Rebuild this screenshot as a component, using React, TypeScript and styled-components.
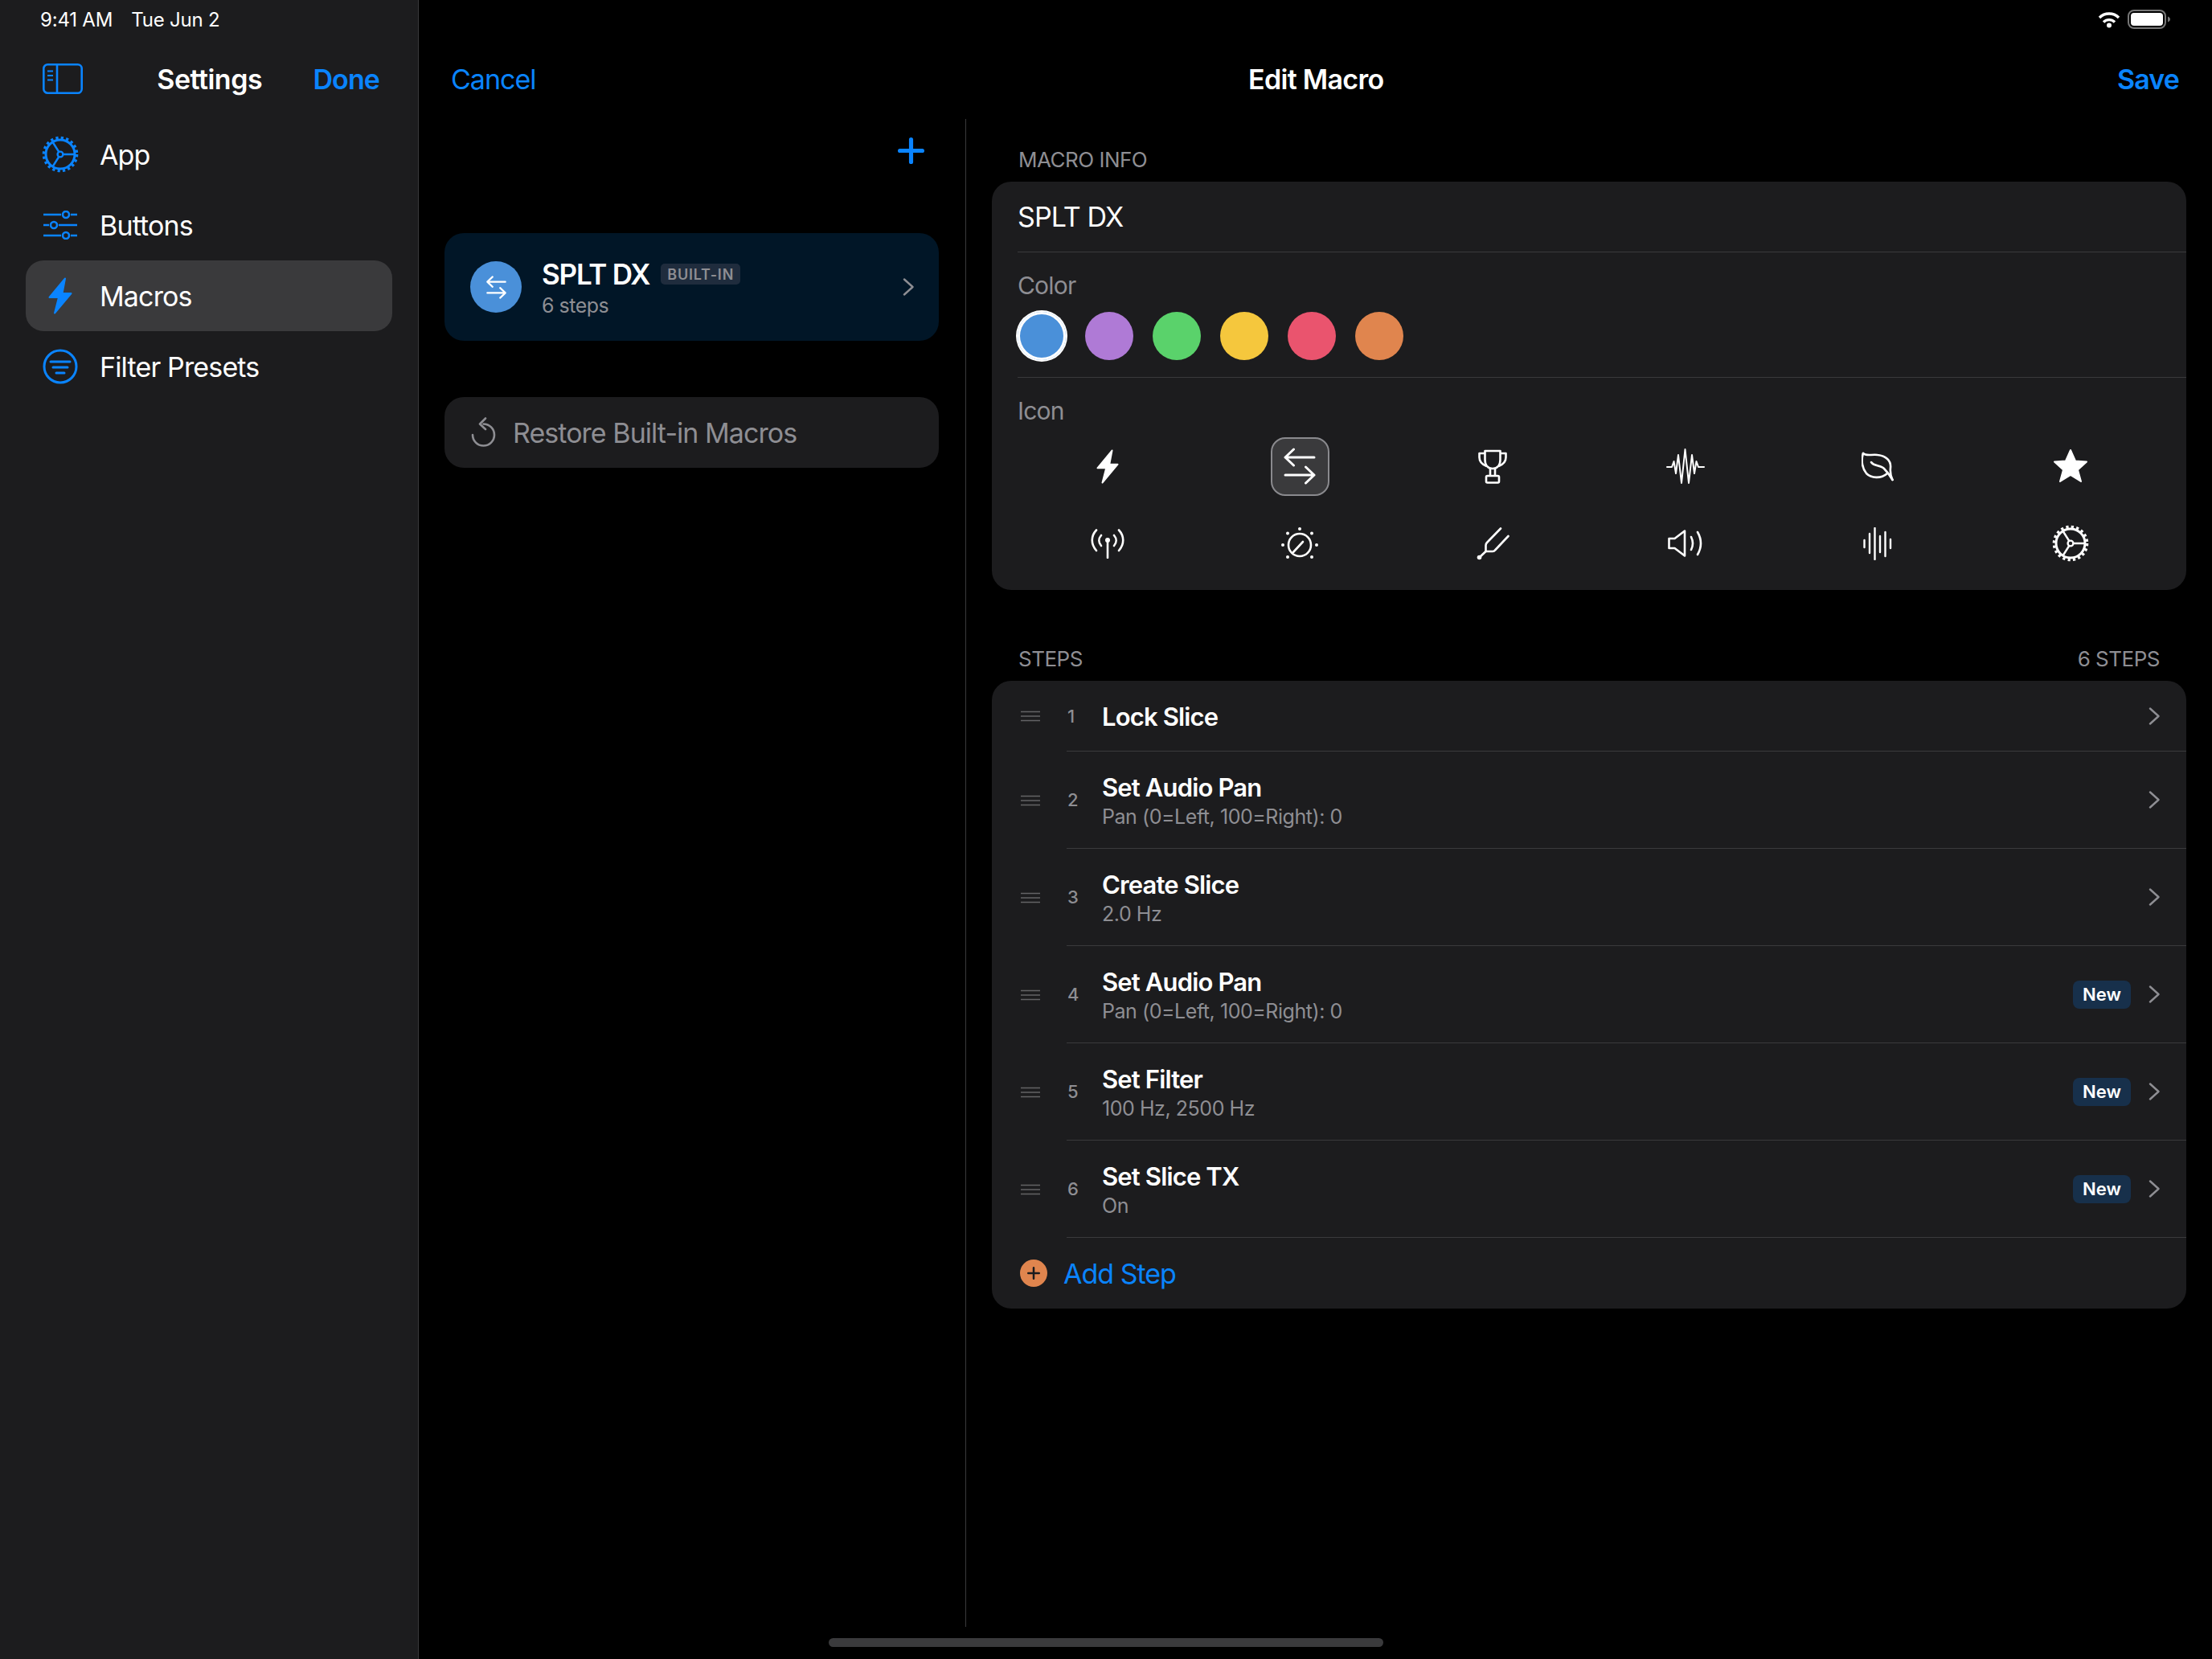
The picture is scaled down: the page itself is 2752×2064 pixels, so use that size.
import React from 'react'
import styled, { createGlobalStyle } from 'styled-components'

const BLUE = '#0a84ff'
const GREY = '#8e8e93'
const PANEL = '#1c1c1e'
const LINE = '#3a3a3c'

const GlobalStyle = createGlobalStyle`
  html, body {
    margin: 0;
    padding: 0;
    background: #000;
  }
  body {
    font-family: Inter, "Noto Sans", "Liberation Sans", sans-serif;
    color: #fff;
  }
`

const Screen = styled.div`
  position: relative;
  display: flex;
  width: 2752px;
  height: 2064px;
  overflow: hidden;
  background: #000;
`

const Sidebar = styled.aside`
  flex: 0 0 521px;
  box-sizing: border-box;
  background: ${PANEL};
  border-right: 1px solid ${LINE};
`

const StatusRow = styled.div`
  display: flex;
  align-items: center;
  height: 48px;
  box-sizing: border-box;
`

const SidebarStatus = styled(StatusRow)`
  padding-left: 50px;
  gap: 23px;
  font-size: 24px;
  font-weight: 400;
  letter-spacing: -0.2px;
`

const MainStatus = styled(StatusRow)`
  justify-content: flex-end;
  gap: 9px;
  padding-right: 52px;
`

const SidebarNav = styled.div`
  display: flex;
  align-items: center;
  height: 100px;
  padding: 0 48px 0 53px;
`

const SidebarTitle = styled.div`
  flex: 1;
  text-align: center;
  font-size: 34px;
  font-weight: 600;
  letter-spacing: -0.5px;
  padding-left: 29px;
`

const LinkText = styled.span<{ $bold?: boolean }>`
  color: ${BLUE};
  font-size: 34px;
  font-weight: ${({ $bold }) => ($bold ? 600 : 400)};
  letter-spacing: ${({ $bold }) => ($bold ? '-0.9px' : '-1px')};
`

const MenuList = styled.nav`
  padding: 0 32px;
`

const MenuRow = styled.div<{ $active?: boolean }>`
  display: flex;
  align-items: center;
  height: 88px;
  border-radius: 22px;
  background: ${({ $active }) => ($active ? '#3a3a3c' : 'transparent')};
  font-size: 34px;
  letter-spacing: -0.85px;
`

const MenuIcon = styled.span`
  display: flex;
  align-items: center;
  justify-content: center;
  flex: 0 0 48px;
  margin: 0 25px 0 19px;
`

const Main = styled.main`
  flex: 1;
  display: flex;
  flex-direction: column;
  min-width: 0;
`

const MainNav = styled.div`
  display: flex;
  align-items: center;
  justify-content: space-between;
  height: 100px;
  padding: 0 41px 0 40px;
`

const MainTitle = styled.div`
  font-size: 34px;
  font-weight: 600;
  letter-spacing: -0.7px;
  padding-right: 26px;
`

const Columns = styled.div`
  flex: 1;
  display: flex;
  min-height: 0;
  margin-bottom: 40px;
`

const ListColumn = styled.section`
  flex: 0 0 681px;
  box-sizing: border-box;
  padding: 0 33px 0 32px;
  border-right: 1px solid ${LINE};
`

const ListTools = styled.div`
  display: flex;
  justify-content: flex-end;
  height: 142px;
  box-sizing: border-box;
  padding: 23px 18px 0 0;
`

const MacroCard = styled.div`
  display: flex;
  align-items: center;
  height: 134px;
  padding: 0 31px 0 32px;
  border-radius: 24px;
  background: #011627;
`

const MacroBadgeIcon = styled.span`
  display: flex;
  align-items: center;
  justify-content: center;
  flex: 0 0 64px;
  height: 64px;
  border-radius: 50%;
  background: #4a90d9;
  margin-right: 25px;
`

const MacroText = styled.div`
  flex: 1;
  padding-top: 2px;
`

const MacroTitleRow = styled.div`
  display: flex;
  align-items: center;
  gap: 14px;
  height: 44px;
`

const MacroTitle = styled.span`
  font-size: 35px;
  font-weight: 600;
  letter-spacing: -1.2px;
`

const BuiltInTag = styled.span`
  display: flex;
  align-items: center;
  height: 26px;
  padding: 0 8px;
  border-radius: 5px;
  background: #1f2c3d;
  color: ${GREY};
  font-size: 18px;
  font-weight: 600;
  letter-spacing: 0.8px;
`

const MacroSub = styled.div`
  color: ${GREY};
  font-size: 25px;
  line-height: 34px;
  letter-spacing: -0.5px;
`

const RestoreButton = styled.div`
  display: flex;
  align-items: center;
  gap: 21px;
  height: 88px;
  margin-top: 70px;
  padding-left: 33px;
  border-radius: 24px;
  background: ${PANEL};
  color: ${GREY};
  font-size: 34px;
  letter-spacing: -0.95px;
`

const DetailColumn = styled.section`
  flex: 1;
  box-sizing: border-box;
  padding: 0 32px;
`

const SectionHeader = styled.div`
  display: flex;
  align-items: center;
  justify-content: space-between;
  height: 78px;
  box-sizing: border-box;
  padding: 22px 33px 0 33px;
  color: ${GREY};
  font-size: 26px;
  letter-spacing: -0.5px;
`

const Card = styled.div`
  margin-bottom: 35px;
  border-radius: 24px;
  background: ${PANEL};
  overflow: hidden;
`

const NameRow = styled.div`
  display: flex;
  align-items: center;
  height: 87px;
  margin-left: 32px;
  border-bottom: 1px solid ${LINE};
  font-size: 34px;
  letter-spacing: -0.9px;
`

const FieldSection = styled.div<{ $divided?: boolean }>`
  margin-left: 32px;
  padding: 23px 0 ${({ $divided }) => ($divided ? '21px' : '22px')};
  border-bottom: ${({ $divided }) => ($divided ? `1px solid ${LINE}` : 'none')};
`

const FieldLabel = styled.div`
  height: 36px;
  line-height: 36px;
  margin-bottom: 15px;
  color: ${GREY};
  font-size: 30px;
  letter-spacing: -0.8px;
`

const SwatchRow = styled.div`
  display: flex;
  gap: 24px;
`

const Swatch = styled.span<{ $color: string; $selected?: boolean }>`
  width: 60px;
  height: 60px;
  border-radius: 50%;
  background: ${({ $color }) => $color};
  box-shadow: ${({ $selected }) => ($selected ? '0 0 0 2px #fff, inset 0 0 0 3px #fff' : 'none')};
`

const IconGrid = styled.div`
  display: grid;
  grid-template-columns: repeat(6, 1fr);
  row-gap: 24px;
  margin: 0 -8px 0 -8px;
  padding-right: 32px;
`

const IconCell = styled.div`
  display: flex;
  align-items: center;
  justify-content: center;
  height: 72px;
`

const SelectedTile = styled.div`
  display: flex;
  align-items: center;
  justify-content: center;
  box-sizing: border-box;
  width: 73px;
  height: 73px;
  border: 2px solid #8a8a8e;
  border-radius: 18px;
  background: #3a3a3c;
`

const StepRow = styled.div<{ $height: number }>`
  display: flex;
  height: ${({ $height }) => $height}px;
`

const Handle = styled.div`
  flex: 0 0 93px;
  display: flex;
  align-items: center;
  padding-left: 36px;
  box-sizing: border-box;
`

const StepBody = styled.div`
  flex: 1;
  display: flex;
  align-items: center;
  padding-right: 33px;
  border-bottom: 1px solid ${LINE};
`

const StepNumber = styled.span`
  flex: 0 0 43px;
  padding-left: 1px;
  color: ${GREY};
  font-size: 22px;
  font-weight: 500;
`

const StepText = styled.div`
  flex: 1;
  padding-top: 2px;
`

const StepTitle = styled.div`
  font-size: 31px;
  line-height: 40px;
  font-weight: 600;
  letter-spacing: -0.85px;
`

const StepSub = styled.div`
  color: ${GREY};
  font-size: 25px;
  line-height: 32px;
  letter-spacing: -0.45px;
`

const NewTag = styled.span`
  display: flex;
  align-items: center;
  justify-content: center;
  width: 72px;
  height: 35px;
  margin-right: 22px;
  border-radius: 8px;
  background: #17304b;
  font-size: 22px;
  font-weight: 600;
`

const AddRow = styled.div`
  display: flex;
  align-items: center;
  gap: 20px;
  height: 88px;
  padding-left: 35px;
`

const AddIcon = styled.span`
  display: flex;
  align-items: center;
  justify-content: center;
  width: 34px;
  height: 34px;
  border-radius: 50%;
  background: #e0854e;
`

const HomeIndicator = styled.div`
  position: absolute;
  left: 1031px;
  bottom: 15px;
  width: 690px;
  height: 11px;
  border-radius: 6px;
  background: #3a3a3c;
`

type IconProps = { color?: string }

const Gear = ({ color = '#fff', size = 46 }: IconProps & { size?: number }) => (
  <svg width={size} height={size} viewBox="0 0 46 46" fill="none" stroke={color}>
    <circle cx="23" cy="23" r="18" strokeWidth="3" />
    <circle cx="23" cy="23" r="20.6" strokeWidth="3.4" strokeDasharray="3.24 3.24" />
    <circle cx="23" cy="23" r="3.4" strokeWidth="2.4" />
    <path d="M26.4 23H41M21.3 20 14 8.5M21.3 26 14 37.5" strokeWidth="2.4" />
  </svg>
)

const Sliders = ({ color = BLUE }: IconProps) => (
  <svg width="44" height="36" viewBox="0 0 44 36" fill="none" stroke={color} strokeWidth="2.6">
    <path d="M1 5H23M35 5H43M1 18H8M20 18H43M1 31H23M35 31H43" />
    <circle cx="29" cy="5" r="4" />
    <circle cx="14" cy="18" r="4" />
    <circle cx="29" cy="31" r="4" />
  </svg>
)

const Bolt = ({ color = '#fff', w = 30, h = 46 }: IconProps & { w?: number; h?: number }) => (
  <svg width={w} height={h} viewBox="0 0 30 46" fill={color} stroke={color} strokeWidth="2" strokeLinejoin="round">
    <path d="M21 1.5 1.5 25H13L8 44.5 28.5 20H17.5Z" />
  </svg>
)

const FilterCircle = () => (
  <svg width="44" height="44" viewBox="0 0 44 44" fill="none" stroke={BLUE} strokeWidth="3" strokeLinecap="round">
    <circle cx="22" cy="22" r="20" />
    <path d="M10 16H34M13 23H31M17 30H27" />
  </svg>
)

const SidebarToggle = () => (
  <svg width="50" height="38" viewBox="0 0 50 38" fill="none" stroke={BLUE} strokeWidth="2.6">
    <rect x="1.3" y="1.3" width="47.4" height="35.4" rx="5" />
    <path d="M18 1V37" />
    <path d="M6 9.5H13M6 15H13M6 20.5H13" strokeWidth="2" />
  </svg>
)

const Swap = ({ w, h, stroke }: { w: number; h: number; stroke: number }) => (
  <svg width={w} height={h} viewBox="0 0 40 46" fill="none" stroke="#fff" strokeWidth={stroke} strokeLinecap="round" strokeLinejoin="round">
    <path d="M38 12H2M12.5 2 2 12 12.5 22" />
    <path d="M2 34H38M27.5 24 38 34 27.5 44" />
  </svg>
)

const Trophy = () => (
  <svg width="38" height="43" viewBox="0 0 38 43" fill="none" stroke="#fff" strokeWidth="2.6" strokeLinejoin="round">
    <path d="M9.5 2h19v11c0 7-4 11-9.5 11S9.5 20 9.5 13z" />
    <path d="M9.5 5H2.5v5c0 6 4 9 9 11M28.5 5h7v5c0 6-4 9-9 11" />
    <path d="M16 24v9M22 24v9" />
    <rect x="11" y="33" width="16" height="8.5" rx="1.5" />
  </svg>
)

const Waveform = () => (
  <svg width="48" height="45" viewBox="0 0 48 45" fill="none" stroke="#fff" strokeWidth="2" strokeLinecap="round" strokeLinejoin="round">
    <polyline points="1,23 7,23 9.5,16 12,31 15,8 19,43 23.5,1 28,43 32,8 35,31 37.5,16 40,23 47,23" />
  </svg>
)

const Leaf = () => (
  <svg width="40" height="37" viewBox="0 0 40 37" fill="none" stroke="#fff" strokeWidth="2.6" strokeLinecap="round" strokeLinejoin="round">
    <path d="M2 2C6 6 12 3 20 4c10 1 17 7 16 16-.5 5 0 10 2.500 15" />
    <path d="M2 2C-1 11 1 21 6 27c6 6 18 7 26 0" />
    <path d="M12 13c3 5 12 4 16 8 4 4 7 8 10.500 14" />
  </svg>
)

const Star = () => (
  <svg width="44" height="44" viewBox="0 0 44 44" fill="#fff" stroke="#fff" strokeWidth="2" strokeLinejoin="round">
    <path d="M22 2 28 15.500 42 16.500 31 26.500 35 41 22 33 9 41 13 26.500 2 16.500 16 15.500Z" />
  </svg>
)

const Antenna = () => (
  <svg width="42" height="37" viewBox="0 0 42 37" fill="none" stroke="#fff" strokeWidth="2.6" strokeLinecap="round">
    <path d="M7 1.500C0 9 0 19 7 27M35 1.500c7 7.500 7 17.500 0 25.500M13 8c-3.500 4-3.500 9 0 13M29 8c3.500 4 3.500 9 0 13" />
    <path d="M21 14V36" />
    <circle cx="21" cy="14" r="3" fill="#fff" stroke="none" />
  </svg>
)

const Dial = () => (
  <svg width="46" height="40" viewBox="0 0 46 40" fill="none" stroke="#fff" strokeWidth="2.6" strokeLinecap="round">
    <circle cx="23" cy="22" r="14" />
    <path d="M27 18 15 31" />
    <g fill="#fff" stroke="none">
      <circle cx="23" cy="2" r="2" />
      <circle cx="8" cy="7.500" r="2" />
      <circle cx="38" cy="7.500" r="2" />
      <circle cx="2" cy="22" r="2" />
      <circle cx="44" cy="22" r="2" />
      <circle cx="8" cy="37" r="2" />
      <circle cx="38" cy="37" r="2" />
    </g>
  </svg>
)

const Fork = () => (
  <svg width="41" height="41" viewBox="0 0 41 41" fill="none" stroke="#fff" strokeWidth="2.6" strokeLinecap="round" strokeLinejoin="round">
    <path d="M30 1.500 13 19q-1.500 1.500-1.500 3.500V30H20q2 0 3-1.500L39.500 11" />
    <path d="M11.500 30 3 38" />
    <circle cx="3.500" cy="37.500" r="2.800" fill="#fff" stroke="none" />
  </svg>
)

const Speaker = () => (
  <svg width="44" height="34" viewBox="0 0 44 34" fill="none" stroke="#fff" strokeWidth="2.6" strokeLinecap="round" strokeLinejoin="round">
    <path d="M1.500 11H8.500L21 1.500V32.500L8.500 23H1.500Z" />
    <path d="M29 9q4 8 0 16M37 3q8 14 0 28" />
  </svg>
)

const BARS = [
  { x: 1.5, top: 16, bottom: 25 },
  { x: 8, top: 8, bottom: 32 },
  { x: 14.5, top: 1, bottom: 40 },
  { x: 21, top: 11, bottom: 31 },
  { x: 27.5, top: 6, bottom: 36 },
  { x: 34, top: 15, bottom: 26 },
]

const Bars = () => (
  <svg width="36" height="41" viewBox="0 0 36 41" fill="none" stroke="#fff" strokeWidth="2.400" strokeLinecap="round">
    {BARS.map(bar => (
      <line key={bar.x} x1={bar.x} x2={bar.x} y1={bar.top} y2={bar.bottom} />
    ))}
  </svg>
)

const Chevron = () => (
  <svg width="14" height="22" viewBox="0 0 14 22" fill="none" stroke={GREY} strokeWidth="2.400" strokeLinecap="round" strokeLinejoin="round">
    <path d="M2 1.500 12.500 11 2 20.500" />
  </svg>
)

const Restore = () => (
  <svg width="31" height="38" viewBox="0 0 31 38" fill="none" stroke={GREY} strokeWidth="2.600" strokeLinecap="round" strokeLinejoin="round">
    <path d="M15.500 8.500A13.500 13.500 0 1 1 2 22" />
    <path d="M18 1.500 11 8.500 18 15" />
  </svg>
)

const PlusMark = ({ size, stroke, color }: { size: number; stroke: number; color: string }) => (
  <svg width={size} height={size} viewBox="0 0 32 32" fill="none" stroke={color} strokeWidth={stroke} strokeLinecap="round">
    <path d="M16 2.500V29.500M2.500 16H29.500" />
  </svg>
)

const DragLines = () => (
  <svg width="24" height="14" viewBox="0 0 24 14" stroke="#636366" strokeWidth="1.600">
    <path d="M0 1.500H24M0 7H24M0 12.500H24" />
  </svg>
)

const Wifi = () => (
  <svg width="28" height="21" viewBox="0 0 28 21" fill="none" stroke="#fff" strokeWidth="3.400">
    <path d="M2 8A17 17 0 0 1 26 8M7 13.500A10 10 0 0 1 21 13.500" />
    <circle cx="14" cy="17.500" r="3" fill="#fff" stroke="none" />
  </svg>
)

const Battery = () => (
  <svg width="53" height="24" viewBox="0 0 53 24">
    <rect x="1" y="1" width="46" height="22" rx="7" fill="none" stroke="#777" strokeWidth="2" />
    <rect x="4" y="4" width="40" height="16" rx="4" fill="#fff" />
    <path d="M50 8.500C52 9.500 53 10.500 53 12s-1 2.500-3 3.500Z" fill="#777" />
  </svg>
)

const MENU = [
  { label: 'App', icon: <Gear color={BLUE} /> },
  { label: 'Buttons', icon: <Sliders /> },
  { label: 'Macros', icon: <Bolt color={BLUE} />, active: true },
  { label: 'Filter Presets', icon: <FilterCircle /> },
]

const SWATCHES = ['#4a90d9', '#af7ad6', '#5ad26b', '#f5c73d', '#ea546e', '#e0854e']

const ICONS = [
  <Bolt key="bolt" w={28} h={43} />,
  <SelectedTile key="swap">
    <Swap w={40} h={46} stroke={3} />
  </SelectedTile>,
  <Trophy key="trophy" />,
  <Waveform key="wave" />,
  <Leaf key="leaf" />,
  <Star key="star" />,
  <Antenna key="antenna" />,
  <Dial key="dial" />,
  <Fork key="fork" />,
  <Speaker key="speaker" />,
  <Bars key="bars" />,
  <Gear key="gear" />,
]

const STEPS = [
  { title: 'Lock Slice' },
  { title: 'Set Audio Pan', sub: 'Pan (0=Left, 100=Right): 0' },
  { title: 'Create Slice', sub: '2.0 Hz' },
  { title: 'Set Audio Pan', sub: 'Pan (0=Left, 100=Right): 0', isNew: true },
  { title: 'Set Filter', sub: '100 Hz, 2500 Hz', isNew: true },
  { title: 'Set Slice TX', sub: 'On', isNew: true },
]

export default function App() {
  return (
    <Screen>
      <GlobalStyle />
      <Sidebar>
        <SidebarStatus>
          <span>9:41 AM</span>
          <span>Tue Jun 2</span>
        </SidebarStatus>
        <SidebarNav>
          <SidebarToggle />
          <SidebarTitle>Settings</SidebarTitle>
          <LinkText $bold>Done</LinkText>
        </SidebarNav>
        <MenuList>
          {MENU.map(item => (
            <MenuRow key={item.label} $active={item.active}>
              <MenuIcon>{item.icon}</MenuIcon>
              {item.label}
            </MenuRow>
          ))}
        </MenuList>
      </Sidebar>
      <Main>
        <MainStatus>
          <Wifi />
          <Battery />
        </MainStatus>
        <MainNav>
          <LinkText>Cancel</LinkText>
          <MainTitle>Edit Macro</MainTitle>
          <LinkText $bold>Save</LinkText>
        </MainNav>
        <Columns>
          <ListColumn>
            <ListTools>
              <PlusMark size={33} stroke={5} color={BLUE} />
            </ListTools>
            <MacroCard>
              <MacroBadgeIcon>
                <Swap w={25} h={29} stroke={3.4} />
              </MacroBadgeIcon>
              <MacroText>
                <MacroTitleRow>
                  <MacroTitle>SPLT DX</MacroTitle>
                  <BuiltInTag>BUILT-IN</BuiltInTag>
                </MacroTitleRow>
                <MacroSub>6 steps</MacroSub>
              </MacroText>
              <Chevron />
            </MacroCard>
            <RestoreButton>
              <Restore />
              Restore Built-in Macros
            </RestoreButton>
          </ListColumn>
          <DetailColumn>
            <SectionHeader>MACRO INFO</SectionHeader>
            <Card>
              <NameRow>SPLT DX</NameRow>
              <FieldSection $divided>
                <FieldLabel>Color</FieldLabel>
                <SwatchRow>
                  {SWATCHES.map((color, i) => (
                    <Swatch key={color} $color={color} $selected={i === 0} />
                  ))}
                </SwatchRow>
              </FieldSection>
              <FieldSection>
                <FieldLabel>Icon</FieldLabel>
                <IconGrid>
                  {ICONS.map(icon => (
                    <IconCell key={icon.key}>{icon}</IconCell>
                  ))}
                </IconGrid>
              </FieldSection>
            </Card>
            <SectionHeader>
              <span>STEPS</span>
              <span>6 STEPS</span>
            </SectionHeader>
            <Card>
              {STEPS.map((step, i) => (
                <StepRow key={i} $height={step.sub ? 121 : 88}>
                  <Handle>
                    <DragLines />
                  </Handle>
                  <StepBody>
                    <StepNumber>{i + 1}</StepNumber>
                    <StepText>
                      <StepTitle>{step.title}</StepTitle>
                      {step.sub && <StepSub>{step.sub}</StepSub>}
                    </StepText>
                    {step.isNew && <NewTag>New</NewTag>}
                    <Chevron />
                  </StepBody>
                </StepRow>
              ))}
              <AddRow>
                <AddIcon>
                  <PlusMark size={16} stroke={5} color="#1c1c1e" />
                </AddIcon>
                <LinkText>Add Step</LinkText>
              </AddRow>
            </Card>
          </DetailColumn>
        </Columns>
      </Main>
      <HomeIndicator />
    </Screen>
  )
}
